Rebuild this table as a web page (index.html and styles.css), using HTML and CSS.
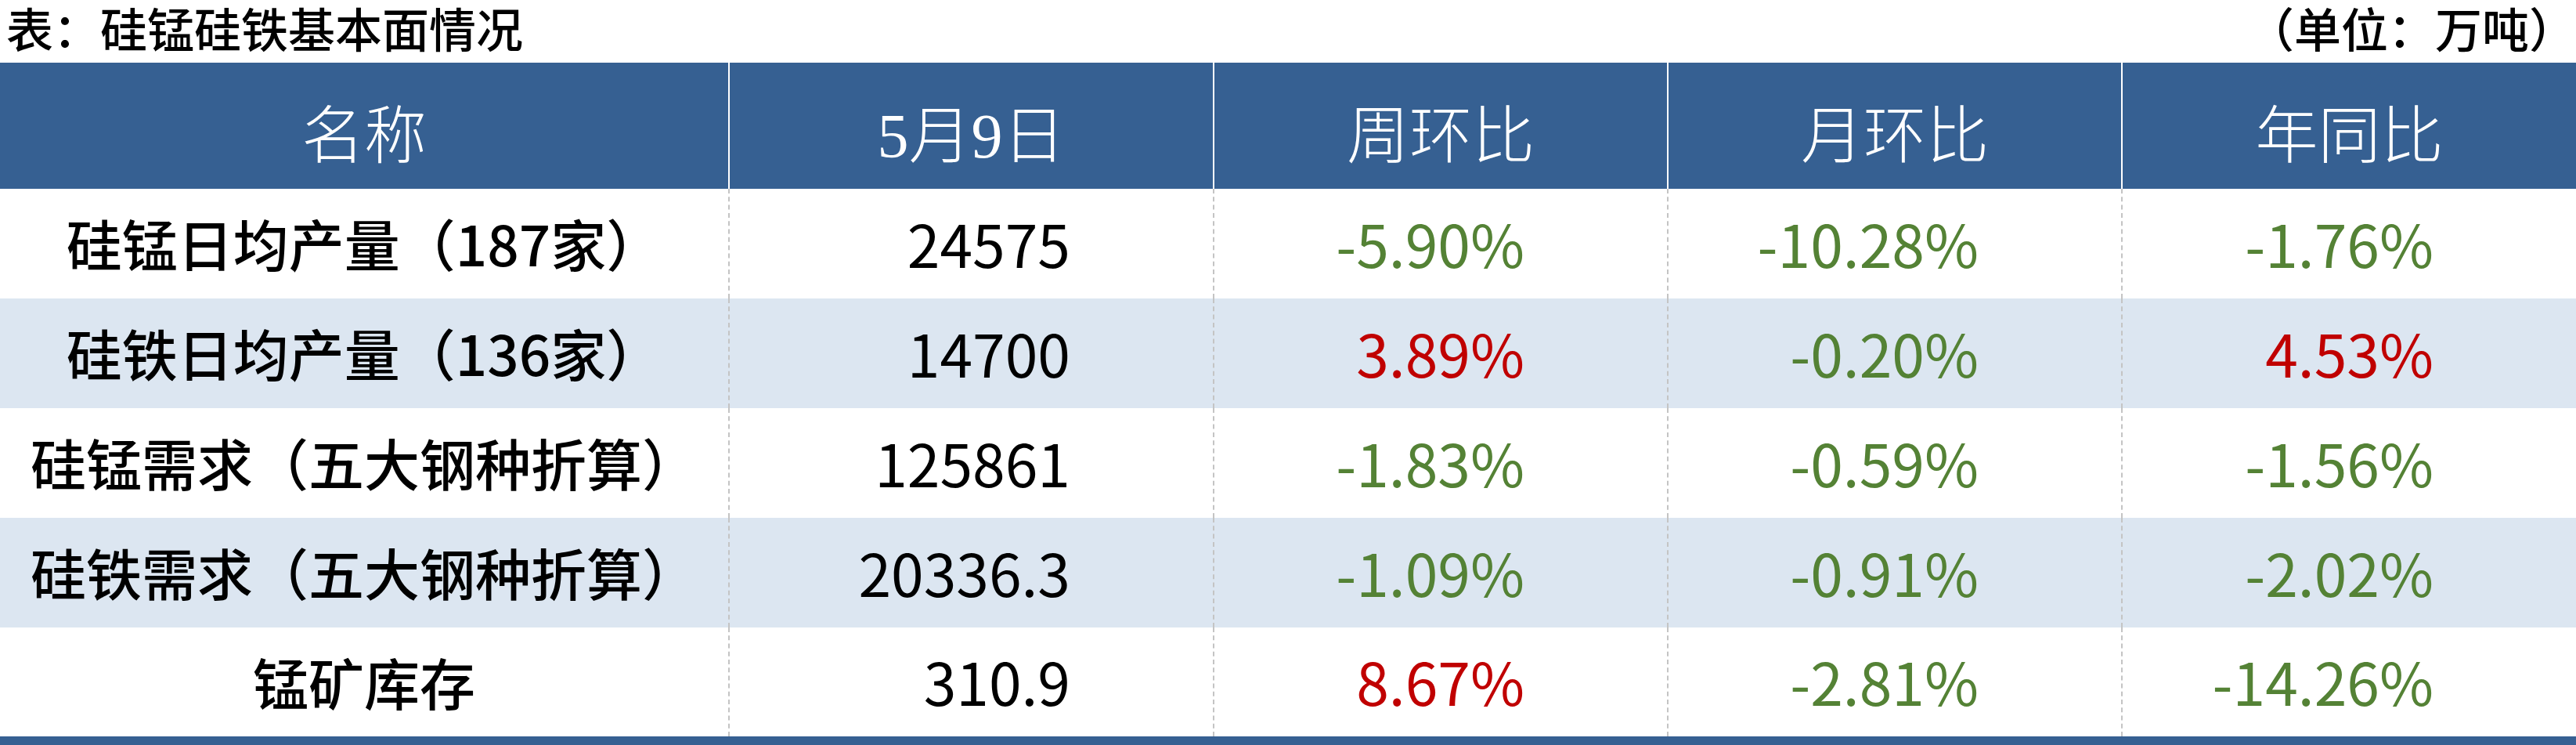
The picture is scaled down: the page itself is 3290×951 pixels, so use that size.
FILE: index.html
```html
<!DOCTYPE html>
<html lang="zh-CN">
<head>
<meta charset="utf-8">
<title>硅锰硅铁基本面情况</title>
<link rel="stylesheet" href="styles.css">
</head>
<body>
<div class="page">
  <div class="caption">
    <span class="caption-title">表：硅锰硅铁基本面情况</span>
    <span class="caption-unit">（单位：万吨）</span>
  </div>
  <div class="table">
    <div class="row head">
      <div class="cell">名称</div>
      <div class="cell">5月9日</div>
      <div class="cell">周环比</div>
      <div class="cell">月环比</div>
      <div class="cell">年同比</div>
    </div>
    <div class="row body">
      <div class="cell name">硅锰日均产量（187家）</div>
      <div class="cell val">24575</div>
      <div class="cell pct down">-5.90%</div>
      <div class="cell pct down">-10.28%</div>
      <div class="cell pct down">-1.76%</div>
    </div>
    <div class="row body alt">
      <div class="cell name">硅铁日均产量（136家）</div>
      <div class="cell val">14700</div>
      <div class="cell pct up">3.89%</div>
      <div class="cell pct down">-0.20%</div>
      <div class="cell pct up">4.53%</div>
    </div>
    <div class="row body">
      <div class="cell name">硅锰需求（五大钢种折算）</div>
      <div class="cell val">125861</div>
      <div class="cell pct down">-1.83%</div>
      <div class="cell pct down">-0.59%</div>
      <div class="cell pct down">-1.56%</div>
    </div>
    <div class="row body alt">
      <div class="cell name">硅铁需求（五大钢种折算）</div>
      <div class="cell val">20336.3</div>
      <div class="cell pct down">-1.09%</div>
      <div class="cell pct down">-0.91%</div>
      <div class="cell pct down">-2.02%</div>
    </div>
    <div class="row body last">
      <div class="cell name">锰矿库存</div>
      <div class="cell val">310.9</div>
      <div class="cell pct up">8.67%</div>
      <div class="cell pct down">-2.81%</div>
      <div class="cell pct down">-14.26%</div>
    </div>
  </div>
</div>
</body>
</html>
```
FILE: styles.css
```css
html, body {
  margin: 0;
  padding: 0;
  background: #ffffff;
}

.page {
  width: 3290px;
  height: 951px;
  display: flex;
  flex-direction: column;
  font-family: "Noto Sans CJK SC", sans-serif;
}

.caption {
  height: 80px;
  box-sizing: border-box;
  display: flex;
  justify-content: space-between;
  align-items: flex-start;
  padding: 5px 0 0 8px;
  font-size: 60px;
  font-weight: 500;
  color: #000000;
  line-height: 60px;
}

.table {
  display: flex;
  flex-direction: column;
  border-bottom: 11px solid #366092;
}

.row {
  display: grid;
  grid-template-columns: 930px 619px 580px 580px 581px;
}

.head {
  height: 161px;
  background: #366092;
  color: #ffffff;
  font-family: "Liberation Serif", "Noto Sans CJK SC", serif;
  font-weight: 300;
  font-size: 80px;
}

.head .cell {
  display: flex;
  align-items: center;
  justify-content: center;
  padding-top: 10px;
  box-sizing: border-box;
}

.head .cell + .cell {
  border-left: 2px solid #ffffff;
}

.body {
  height: 140px;
  background: #ffffff;
}

.body.last {
  height: 139px;
}

.body.alt {
  background: #dce6f1;
}

.body .cell {
  display: flex;
  align-items: center;
  box-sizing: border-box;
  padding-bottom: 4px;
}

.body .cell + .cell {
  border-left: 2px dashed #c4c4c4;
}

.name {
  justify-content: center;
  font-size: 71px;
  font-weight: 500;
  color: #000000;
}

.val,
.pct {
  justify-content: flex-end;
  padding-right: 182px;
  font-size: 75px;
  font-weight: 400;
}

.val {
  color: #000000;
}

.down {
  color: #548235;
}

.up {
  color: #c00000;
}
```
